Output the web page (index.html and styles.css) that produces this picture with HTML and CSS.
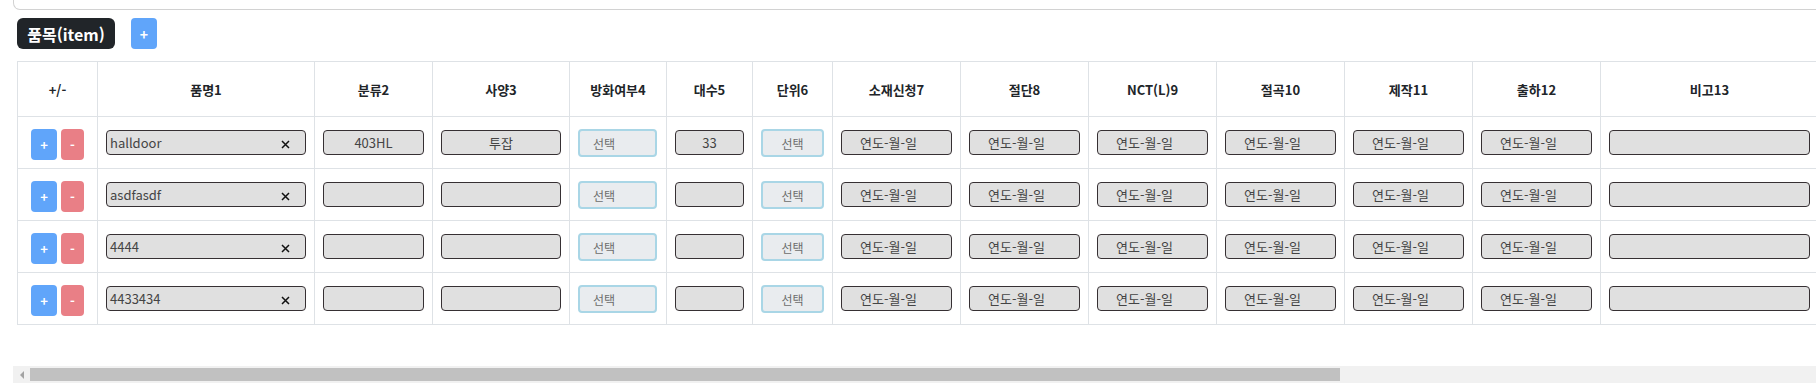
FILE: index.html
```html
<!DOCTYPE html>
<html lang="ko">
<head>
<meta charset="utf-8">
<title>품목</title>
<link rel="stylesheet" href="styles.css">
</head>
<body>
<div class="topcard"></div>
<div class="wrap">
  <div class="title-row">
    <span class="badge">품목(item)</span>
    <button class="addbtn">+</button>
  </div>
  <table class="grid">
    <colgroup>
      <col class="c-pm"><col class="c-name"><col class="c-118"><col class="c-137"><col class="c-97"><col class="c-86"><col class="c-80">
      <col class="c-128"><col class="c-128"><col class="c-128"><col class="c-128"><col class="c-128"><col class="c-128"><col class="c-note">
    </colgroup>
    <thead>
      <tr>
        <th>+/-</th><th>품명1</th><th>분류2</th><th>사양3</th><th>방화여부4</th><th>대수5</th><th>단위6</th>
        <th>소재신청7</th><th>절단8</th><th>NCT(L)9</th><th>절곡10</th><th>제작11</th><th>출하12</th><th>비고13</th>
      </tr>
    </thead>
    <tbody>
      <tr>
        <td><div class="pm"><button class="b plus">+</button><button class="b minus">-</button></div></td>
        <td><div class="inp name"><span>halldoor</span><svg class="x" width="9" height="9" viewBox="0 0 9 9"><path d="M1 1L8 8M8 1L1 8" stroke="#111" stroke-width="1.5" fill="none"/></svg></div></td>
        <td><div class="inp">403HL</div></td>
        <td><div class="inp">투잡</div></td>
        <td><div class="sel left">선택</div></td>
        <td><div class="inp">33</div></td>
        <td><div class="sel">선택</div></td>
        <td><div class="inp date">연도-월-일</div></td>
        <td><div class="inp date">연도-월-일</div></td>
        <td><div class="inp date">연도-월-일</div></td>
        <td><div class="inp date">연도-월-일</div></td>
        <td><div class="inp date">연도-월-일</div></td>
        <td><div class="inp date">연도-월-일</div></td>
        <td><div class="inp"></div></td>
      </tr>
      <tr>
        <td><div class="pm"><button class="b plus">+</button><button class="b minus">-</button></div></td>
        <td><div class="inp name"><span>asdfasdf</span><svg class="x" width="9" height="9" viewBox="0 0 9 9"><path d="M1 1L8 8M8 1L1 8" stroke="#111" stroke-width="1.5" fill="none"/></svg></div></td>
        <td><div class="inp"></div></td>
        <td><div class="inp"></div></td>
        <td><div class="sel left">선택</div></td>
        <td><div class="inp"></div></td>
        <td><div class="sel">선택</div></td>
        <td><div class="inp date">연도-월-일</div></td>
        <td><div class="inp date">연도-월-일</div></td>
        <td><div class="inp date">연도-월-일</div></td>
        <td><div class="inp date">연도-월-일</div></td>
        <td><div class="inp date">연도-월-일</div></td>
        <td><div class="inp date">연도-월-일</div></td>
        <td><div class="inp"></div></td>
      </tr>
      <tr>
        <td><div class="pm"><button class="b plus">+</button><button class="b minus">-</button></div></td>
        <td><div class="inp name"><span>4444</span><svg class="x" width="9" height="9" viewBox="0 0 9 9"><path d="M1 1L8 8M8 1L1 8" stroke="#111" stroke-width="1.5" fill="none"/></svg></div></td>
        <td><div class="inp"></div></td>
        <td><div class="inp"></div></td>
        <td><div class="sel left">선택</div></td>
        <td><div class="inp"></div></td>
        <td><div class="sel">선택</div></td>
        <td><div class="inp date">연도-월-일</div></td>
        <td><div class="inp date">연도-월-일</div></td>
        <td><div class="inp date">연도-월-일</div></td>
        <td><div class="inp date">연도-월-일</div></td>
        <td><div class="inp date">연도-월-일</div></td>
        <td><div class="inp date">연도-월-일</div></td>
        <td><div class="inp"></div></td>
      </tr>
      <tr>
        <td><div class="pm"><button class="b plus">+</button><button class="b minus">-</button></div></td>
        <td><div class="inp name"><span>4433434</span><svg class="x" width="9" height="9" viewBox="0 0 9 9"><path d="M1 1L8 8M8 1L1 8" stroke="#111" stroke-width="1.5" fill="none"/></svg></div></td>
        <td><div class="inp"></div></td>
        <td><div class="inp"></div></td>
        <td><div class="sel left">선택</div></td>
        <td><div class="inp"></div></td>
        <td><div class="sel">선택</div></td>
        <td><div class="inp date">연도-월-일</div></td>
        <td><div class="inp date">연도-월-일</div></td>
        <td><div class="inp date">연도-월-일</div></td>
        <td><div class="inp date">연도-월-일</div></td>
        <td><div class="inp date">연도-월-일</div></td>
        <td><div class="inp date">연도-월-일</div></td>
        <td><div class="inp"></div></td>
      </tr>
    </tbody>
  </table>
</div>
<div class="hscroll">
  <div class="arrow"><span class="tri"></span></div>
  <div class="thumb"></div>
</div>
</body>
</html>
```
FILE: styles.css
```css
html, body {
  margin: 0;
  padding: 0;
  background: #fff;
  overflow: hidden;
}
body {
  font-family: "Noto Sans CJK KR", "Noto Sans", sans-serif;
  color: #212529;
  width: 2000px;
}
.topcard {
  margin-left: 13px;
  width: 1900px;
  height: 9px;
  border: 1px solid #d2d2d2;
  border-top: none;
  border-radius: 0 0 7px 7px;
}
.wrap {
  padding-left: 17px;
  padding-top: 8px;
}
.title-row {
  display: flex;
  gap: 16px;
  height: 31px;
}
.badge {
  display: flex;
  align-items: center;
  justify-content: center;
  width: 98px;
  height: 31px;
  background: #212529;
  color: #fff;
  font-weight: 700;
  font-size: 16px;
  border-radius: 6px;
}
.addbtn {
  width: 26px;
  height: 31px;
  border: none;
  padding: 0;
  background: #60a5fa;
  color: #fff;
  font-family: inherit;
  font-size: 14px;
  font-weight: 700;
  border-radius: 4px;
}
.grid {
  margin-top: 12px;
  border-collapse: collapse;
  table-layout: fixed;
  width: 1801px;
}
.grid th, .grid td {
  border: 1px solid #dee2e6;
  box-sizing: border-box;
  padding: 0 8px;
  vertical-align: middle;
}
.grid th {
  height: 55px;
  font-size: 13px;
  font-weight: 700;
  text-align: center;
  color: #212529;
}
.grid td {
  height: 52px;
}
.c-pm { width: 80px; }
.c-name { width: 217px; }
.c-118 { width: 118px; }
.c-137 { width: 137px; }
.c-97 { width: 97px; }
.c-86 { width: 86px; }
.c-80 { width: 80px; }
.c-128 { width: 128px; }
.c-note { width: 218px; }
.pm {
  display: flex;
  justify-content: center;
  gap: 4px;
  margin-top: 3px;
}
.b {
  height: 31px;
  border: none;
  padding: 0;
  color: #fff;
  font-family: inherit;
  font-size: 13px;
  font-weight: 700;
  border-radius: 4px;
}
.plus { width: 26px; background: #60a5fa; }
.minus { width: 23px; background: #e97f86; }
.inp {
  box-sizing: border-box;
  height: 25px;
  border: 1px solid #363033;
  border-radius: 4px;
  background: #e0e0e0;
  color: #444;
  font-size: 13px;
  display: flex;
  align-items: center;
  justify-content: center;
  white-space: nowrap;
}
.inp.name {
  justify-content: space-between;
  padding: 0 15px 0 3px;
}
.inp.name .x { margin-top: 3px; }
.inp.date {
  justify-content: flex-start;
  padding-left: 18px;
}
.sel {
  box-sizing: border-box;
  height: 28px;
  margin-top: 1px;
  border: 2px solid #a9d6e6;
  border-radius: 4px;
  background: #e9ecef;
  color: #6c6c6c;
  font-size: 12px;
  display: flex;
  align-items: center;
  justify-content: center;
}
.sel.left {
  justify-content: flex-start;
  padding-left: 13px;
  width: 79px;
}
.hscroll {
  margin-top: 41px;
  margin-left: 13px;
  width: 1900px;
  height: 17px;
  background: #f1f1f1;
  display: flex;
  align-items: center;
}
.arrow {
  width: 17px;
  height: 17px;
  display: flex;
  align-items: center;
  justify-content: center;
}
.tri {
  width: 0;
  height: 0;
  border-top: 4px solid transparent;
  border-bottom: 4px solid transparent;
  border-right: 4px solid #a3a3a3;
}
.thumb {
  width: 1310px;
  height: 13px;
  background: #c1c1c1;
}
```
